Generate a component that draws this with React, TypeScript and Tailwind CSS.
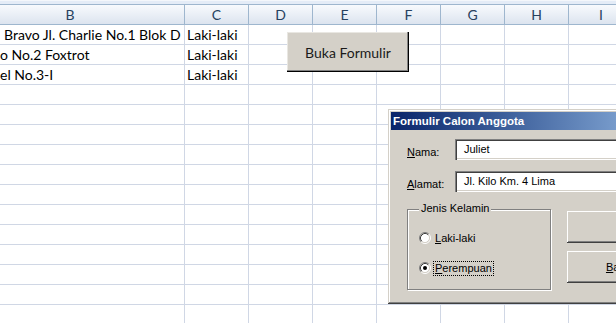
import React from "react";

const cols = ["C", "D", "E", "F", "G", "H"];

const rows = [
  { b: "Bravo Jl. Charlie No.1 Blok D", pad: "pl-[48px]", c: "Laki-laki" },
  { b: "o No.2 Foxtrot", pad: "pl-[44px]", c: "Laki-laki" },
  { b: "el No.3-I", pad: "pl-[44px]", c: "Laki-laki" },
  ...Array.from({ length: 12 }, () => ({ b: "", pad: "", c: "" })),
];

const Radio = ({ checked }: { checked?: boolean }) => (
  <svg width="12" height="12" viewBox="0 0 12 12" className="shrink-0">
    <circle cx="6" cy="6" r="4.5" fill="#fff" />
    <path d="M2.11 9.89A5.5 5.5 0 0 1 9.89 2.11" stroke="#808080" fill="none" />
    <path d="M2.82 9.18A4.5 4.5 0 0 1 9.18 2.82" stroke="#404040" fill="none" />
    <path d="M9.89 2.11A5.5 5.5 0 0 1 2.11 9.89" stroke="#fff" fill="none" />
    <path d="M9.18 2.82A4.5 4.5 0 0 1 2.82 9.18" stroke="#d4d0c8" fill="none" />
    {checked && <circle cx="6" cy="6" r="2" fill="#000" />}
  </svg>
);

const raised =
  "bg-[#d4d0c8] shadow-[inset_-1px_-1px_#404040,inset_1px_1px_#fff,inset_-2px_-2px_#808080]";
const sunken =
  "bg-white shadow-[inset_1px_1px_#808080,inset_2px_2px_#404040,inset_-1px_-1px_#fff,inset_-2px_-2px_#d4d0c8]";

export default function App() {
  return (
    <div className="relative w-[616px] h-[323px] overflow-hidden bg-white font-['Lato',sans-serif]">
      {/* top strip */}
      <div className="h-[5px] bg-[#e4ecf7] border-t border-t-[#f4f7fb] border-b border-b-[#9eb6ce]" />

      {/* column headers */}
      <div className="flex h-[20px] border-b border-[#9eb6ce] bg-gradient-to-b from-[#f8fafd] to-[#dce4ef] text-[14px] leading-[19px] text-[#27415f]">
        <div className="-ml-[44px] w-[229px] shrink-0 border-r border-[#9eb6ce] text-center">B</div>
        {cols.map((c) => (
          <div key={c} className="w-[64px] shrink-0 border-r border-[#9eb6ce] text-center">
            {c}
          </div>
        ))}
        <div className="w-[64px] shrink-0 text-center">I</div>
      </div>

      {/* grid rows */}
      {rows.map((r, i) => (
        <div key={i} className="flex h-[20px] border-b border-[#d0d7e5] text-[14px] leading-[20px] text-black">
          <div className={`-ml-[44px] w-[229px] shrink-0 border-r border-[#d0d7e5] whitespace-nowrap overflow-hidden ${r.pad}`}>
            {r.b}
          </div>
          <div className="w-[64px] shrink-0 border-r border-[#d0d7e5] pl-[2px] whitespace-nowrap">{r.c}</div>
          {cols.slice(1).map((c) => (
            <div key={c} className="w-[64px] shrink-0 border-r border-[#d0d7e5]" />
          ))}
          <div className="w-[64px] shrink-0" />
        </div>
      ))}

      {/* sheet button */}
      <button className="absolute left-[287px] top-[32px] w-[122px] h-[40px] bg-[#d4d0c8] text-[14px] text-[#1a1a1a] shadow-[inset_-1px_-1px_#000,inset_-2px_-2px_#808080,inset_1px_1px_#e9e7e2]">
        Buka Formulir
      </button>

      {/* userform dialog */}
      <div className="absolute left-[388px] top-[109px] w-[420px] h-[195px] p-[3px] bg-[#d4d0c8] shadow-[inset_-1px_-1px_#404040,inset_1px_1px_#d4d0c8,inset_-2px_-2px_#808080,inset_2px_2px_#fff] font-['Liberation_Sans',Arial,sans-serif] text-[11px] text-black">
        <div className="h-[18px] pl-[2px] bg-gradient-to-r from-[#0a246a] from-0% to-[#a6caf0] to-75% text-white font-bold text-[11.5px] leading-[18px] whitespace-nowrap">
          Formulir Calon Anggota
        </div>

        <div className="flex items-end mt-[9px] pl-[16px]">
          <span className="w-[48px] shrink-0 leading-[13px] pb-[1px]">
            <span className="underline">N</span>ama:
          </span>
          <div className={`h-[21px] w-[240px] shrink-0 pl-[9px] leading-[21px] ${sunken}`}>Juliet</div>
        </div>

        <div className="flex items-end mt-[11px] pl-[16px]">
          <span className="w-[48px] shrink-0 leading-[13px] pb-[1px]">
            <span className="underline">A</span>lamat:
          </span>
          <div className={`h-[21px] w-[240px] shrink-0 pl-[9px] leading-[21px] whitespace-nowrap ${sunken}`}>
            Jl. Kilo Km. 4 Lima
          </div>
        </div>

        <div className="flex mt-[17px] pl-[16px] gap-[16px]">
          <div className="relative w-[144px] h-[81px] shrink-0 border border-[#808080] shadow-[1px_1px_0_#fff,inset_1px_1px_0_#fff]">
            <span className="absolute left-[11px] -top-[8px] px-[2px] leading-[13px] bg-[#d4d0c8] whitespace-nowrap">
              Jenis Kelamin
            </span>
            <div className="flex flex-col gap-[14px] pt-[20px] pl-[11px]">
              <div className="flex items-center h-[16px] gap-[2px]">
                <Radio />
                <span className="px-[1px] border border-transparent leading-[13px]">
                  <span className="underline">L</span>aki-laki
                </span>
              </div>
              <div className="flex items-center h-[16px] gap-[2px]">
                <Radio checked />
                <span className="px-[1px] border border-dotted border-black leading-[13px]">
                  <span className="underline">P</span>erempuan
                </span>
              </div>
            </div>
          </div>

          <div className="flex flex-col gap-[8px] mt-[2px] shrink-0">
            <div className={`w-[170px] h-[32px] flex items-center justify-center ${raised}`}>Simpan</div>
            <div className={`w-[103px] h-[32px] flex items-center justify-center ${raised}`}>
              <span>
                <span className="underline">B</span>atal
              </span>
            </div>
          </div>
        </div>
      </div>
    </div>
  );
}
